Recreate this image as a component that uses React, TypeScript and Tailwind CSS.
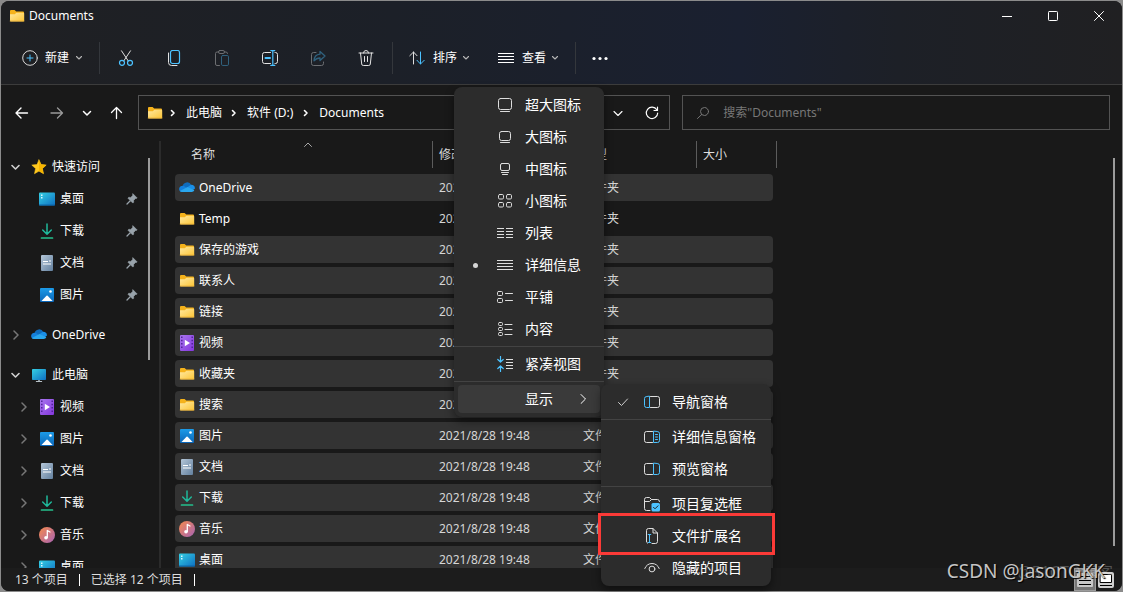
import type { ReactNode } from "react";

const BLUE = "#4cc2ff";

type SvgProps = { size?: number; children: ReactNode; className?: string };

function Svg({ size = 16, children, className = "" }: SvgProps) {
  return (
    <svg
      width={size}
      height={size}
      viewBox={`0 0 ${size} ${size}`}
      fill="none"
      stroke="currentColor"
      strokeLinecap="round"
      strokeLinejoin="round"
      className={`shrink-0 ${className}`}
      aria-hidden="true"
    >
      {children}
    </svg>
  );
}

/* ---------- coloured shell icons ---------- */

function FolderIcon() {
  return (
    <Svg>
      <path d="M1 3a1 1 0 0 1 1-1h3.6l1.6 1.6H14a1 1 0 0 1 1 1V8H1z" fill="#f5b21b" stroke="none" />
      <path d="M1 6.2h4.8L7.4 4.8H14.4a.8.8 0 0 1 .8.8v7a.9.9 0 0 1-.9.9H1.9a.9.9 0 0 1-.9-.9z" fill="url(#folderFace)" stroke="none" />
      <path d="M1.2 13h13.8" stroke="#eab03a" strokeWidth=".8" />
    </Svg>
  );
}

function CloudIcon() {
  return (
    <Svg>
      <path d="M3.6 6.2A4.6 4.6 0 0 1 12.3 5l-4 4.8-6 1.2z" fill="#0f6cbd" stroke="none" />
      <path d="M.1 9.1a3.3 3.3 0 0 1 4.8-3l4.6 2.9-5.6 3H3.3a3.1 3.1 0 0 1-3.2-2.9z" fill="#1480dc" stroke="none" />
      <path d="M8.3 7.2 12 4.800a3.900 3.900 0 0 1 4 3.700l-2.600 1.900z" fill="#1a8fe8" stroke="none" />
      <path d="M.9 11 8.600 6.900l6.700 3.400c-.5 1.100-1.400 1.700-2.600 1.700H3.300A3 3 0 0 1 .9 11z" fill="#2aa7ee" stroke="none" />
    </Svg>
  );
}

function StarIcon() {
  return (
    <Svg>
      <path d="m8 .9 2.100 4.700 5.100.5-3.800 3.500 1.100 5.100L8 12.100l-4.500 2.600 1.100-5.100L.8 6.100l5.100-.5z" fill="#ffc81e" stroke="#ffc81e" strokeWidth=".6" />
      <path d="M8 12.100v-11l2.100 4.500 5 .5-3.700 3.500 1.100 5z" fill="#f7b500" stroke="none" />
    </Svg>
  );
}

function DesktopIcon() {
  return (
    <Svg>
      <rect x="0" y="1.500" width="16" height="13" rx="1" fill="url(#screenFace)" stroke="none" />
      <path d="M2 3.500h1.500v1.500H2zM2 6h1.500v1.500H2z" fill="#d8f7ff" stroke="none" />
      <path d="M.5 14h15" stroke="#0b64a8" strokeWidth="1" />
    </Svg>
  );
}

function MonitorIcon() {
  return (
    <Svg>
      <rect x="1" y="2" width="14" height="11" rx=".8" fill="url(#screenFace)" stroke="none" />
      <path d="M7 13h2v1.200H7z" fill="#8c979f" stroke="none" />
      <path d="M5.300 14.500h5.400" stroke="#b8c1c7" strokeWidth="1" />
    </Svg>
  );
}

function DownloadIcon() {
  return (
    <Svg>
      <path d="M8 1v10M3.700 7 8 11.200 12.300 7" stroke="#1fb89a" strokeWidth="1.500" />
      <path d="M2.500 15h11" stroke="#25c08d" strokeWidth="1.700" />
    </Svg>
  );
}

function DocumentIcon() {
  return (
    <Svg>
      <rect x="2" y="0" width="12" height="16" rx="1" fill="url(#docFace)" stroke="none" />
      <path d="M4 6.500h5M4 9h8M10 6h2" stroke="#fff" strokeWidth="1.200" strokeLinecap="butt" />
    </Svg>
  );
}

function PictureIcon() {
  return (
    <Svg>
      <rect x="1" y="1" width="14" height="14" rx="1" fill="url(#picFace)" stroke="none" />
      <path d="m2.500 14 5-5.200a.8.8 0 0 1 1.100 0l5 5.200z" fill="#fff" stroke="none" />
      <circle cx="11.500" cy="4.500" r="1.300" fill="#fff" stroke="none" />
    </Svg>
  );
}

function VideoIcon() {
  return (
    <Svg>
      <rect x="1" y="0" width="14" height="16" rx="1" fill="url(#videoFace)" stroke="none" />
      <path d="M2.800 1.500v13M13.200 1.500v13" stroke="#4d1f96" strokeWidth="1.400" strokeDasharray="1.500 1.800" strokeLinecap="butt" />
      <path d="M5.800 4.700v6.600L11 8z" fill="#fff" stroke="none" />
    </Svg>
  );
}

function MusicIcon() {
  return (
    <Svg>
      <circle cx="8" cy="8" r="8" fill="url(#musicFace)" stroke="none" />
      <path d="M8.300 10.500V3.500l2.700 1.500" stroke="#fff" strokeWidth="1.300" />
      <circle cx="7" cy="10.800" r="1.800" fill="#fff" stroke="none" />
    </Svg>
  );
}

function Gradients() {
  return (
    <svg width="0" height="0" className="absolute" aria-hidden="true">
      <defs>
        <linearGradient id="folderFace" x1="0" y1="0" x2="1" y2="1">
          <stop offset="0" stopColor="#ffe8a0" />
          <stop offset="1" stopColor="#fcc535" />
        </linearGradient>
        <linearGradient id="screenFace" x1="0" y1="0" x2="1" y2="1">
          <stop offset="0" stopColor="#35d0e4" />
          <stop offset="1" stopColor="#0e6fc2" />
        </linearGradient>
        <linearGradient id="docFace" x1="0" y1="0" x2="1" y2="1">
          <stop offset="0" stopColor="#b4c6d8" />
          <stop offset="1" stopColor="#63809e" />
        </linearGradient>
        <linearGradient id="picFace" x1="0" y1="0" x2="0" y2="1">
          <stop offset="0" stopColor="#1c9be8" />
          <stop offset="1" stopColor="#0a65b8" />
        </linearGradient>
        <linearGradient id="videoFace" x1="0" y1="0" x2="1" y2="1">
          <stop offset="0" stopColor="#a876ee" />
          <stop offset="1" stopColor="#8436dd" />
        </linearGradient>
        <linearGradient id="musicFace" x1="0" y1="0" x2="1" y2="1">
          <stop offset="0" stopColor="#f68a4c" />
          <stop offset="1" stopColor="#a763b5" />
        </linearGradient>
      </defs>
    </svg>
  );
}

/* ---------- small line icons ---------- */

const Down = ({ className = "" }: { className?: string }) => (
  <Svg size={8} className={className}>
    <path d="m1.500 2.500 2.500 2.500 2.500-2.500" strokeWidth="1.100" />
  </Svg>
);

const Right = ({ className = "" }: { className?: string }) => (
  <Svg size={8} className={className}>
    <path d="m2.500 1.500 2.500 2.500-2.500 2.500" strokeWidth="1.600" />
  </Svg>
);

function PinIcon() {
  return (
    <Svg size={12} className="text-[#98a2aa]">
      <path d="m7 .8 4.200 4.200-1 .5-.7-.1-1.900 2 .1 1.800-.9.9-4.900-4.900.9-.9 1.900.1 2-1.900-.1-.8z" fill="currentColor" strokeWidth=".6" />
      <path d="M4 8 1 11" strokeWidth="1.300" />
    </Svg>
  );
}

/* ---------- title bar and command bar ---------- */

function TitleBar() {
  const control = "flex h-7 w-[46px] items-center justify-center text-white hover:bg-white/10";
  return (
    <header className="flex h-[29px] items-center">
      <div className="flex flex-1 items-center gap-1 pl-2">
        <FolderIcon />
        <h1>Documents</h1>
      </div>
      <button aria-label="最小化" className={control}>
        <Svg size={10}><path d="M0 5.500h10" strokeLinecap="butt" /></Svg>
      </button>
      <button aria-label="最大化" className={control}>
        <Svg size={10}><rect x=".5" y=".5" width="9" height="9" rx=".8" /></Svg>
      </button>
      <button aria-label="关闭" className={control}>
        <Svg size={10}><path d="m.5.5 9 9M9.500.5l-9 9" /></Svg>
      </button>
    </header>
  );
}

const Divider = () => <div className="h-8 w-px shrink-0 bg-[#34373c]" />;

function IconButton({ label, children, disabled = false }: { label: string; children: ReactNode; disabled?: boolean }) {
  return (
    <button
      aria-label={label}
      disabled={disabled}
      className="flex h-8 w-12 items-center justify-center text-[#e2e2e2] disabled:opacity-40"
    >
      <Svg>{children}</Svg>
    </button>
  );
}

function CommandBar() {
  return (
    <div className="flex h-[54px] items-center pt-0.5" role="toolbar" aria-label="命令栏">
      <button className="flex w-[98px] items-center pl-[21px] text-white">
        <Svg className="text-[#d8d8d8]">
          <circle cx="8" cy="8" r="7.300" />
          <path d="M8 5v6M5 8h6" stroke={BLUE} />
        </Svg>
        <span className="ml-[7px]">新建</span>
        <Down className="ml-1.5 text-[#b5b5b5]" />
      </button>
      <Divider />
      <div className="flex px-0.5">
        <IconButton label="剪切">
          <path d="M3.500.8 10.300 11M12.500.8 5.700 11" />
          <circle cx="4" cy="12.800" r="2.500" stroke={BLUE} strokeWidth="1.200" />
          <circle cx="12" cy="12.800" r="2.500" stroke={BLUE} strokeWidth="1.200" />
        </IconButton>
        <IconButton label="复制">
          <path d="M2.500 3v9.500a3 3 0 0 0 3 3H11" />
          <rect x="4.500" y=".5" width="9" height="13" rx="2" stroke={BLUE} strokeWidth="1.200" />
        </IconButton>
        <IconButton label="粘贴" disabled>
          <path d="M5 2H3A1.500 1.500 0 0 0 1.500 3.500V14A1.500 1.500 0 0 0 3 15.500h2.500M10 2h2a1.500 1.500 0 0 1 1.500 1.500" />
          <rect x="4.500" y=".5" width="6" height="3" rx="1.300" />
          <rect x="7.500" y="5.500" width="7" height="10" rx="1.300" stroke={BLUE} />
        </IconButton>
        <IconButton label="重命名">
          <path d="M8.500 2.500H2.500a2 2 0 0 0-2 2v7a2 2 0 0 0 2 2h6M13 2.500h.5a2 2 0 0 1 2 2v7a2 2 0 0 1-2 2H13" />
          <path d="M3.500 8h4.500" stroke={BLUE} strokeWidth="2" />
          <path d="M10.800.6v14.800M8.800.6h4M8.800 15.400h4" stroke={BLUE} strokeWidth="1.200" />
        </IconButton>
        <IconButton label="共享" disabled>
          <path d="M6 2.500H3.500a2 2 0 0 0-2 2v9a2 2 0 0 0 2 2h8a2 2 0 0 0 2-2V12" />
          <path d="M10 1.500 15 6l-5 4.500V8C7 8 5.500 9 4 10.800 4.200 7 6.500 4.500 10 4.200z" stroke={BLUE} strokeWidth="1.300" />
        </IconButton>
        <IconButton label="删除">
          <path d="M1 3h14M5.500 3a2.500 2.500 0 0 1 5 0M2.500 3l1.200 11a1.600 1.600 0 0 0 1.600 1.500h5.400a1.600 1.600 0 0 0 1.600-1.500L13.500 3M6.500 6.500v5M9.500 6.500v5" />
        </IconButton>
      </div>
      <Divider />
      <button className="flex w-[90px] items-center pl-4 text-white">
        <Svg className="text-[#dedede]">
          <path d="M4.500 14V2M.8 5.700 4.500 2l3.500 3.700" />
          <path d="M11.500 2v12M8 10.300l3.500 3.700 3.700-3.700" stroke={BLUE} />
        </Svg>
        <span className="ml-2">排序</span>
        <Down className="ml-[5px] text-[#b5b5b5]" />
      </button>
      <button className="flex w-[92px] items-center pl-[15px] text-white" aria-haspopup="menu" aria-expanded="true">
        <Svg><path d="M0 3.500h16M0 6.500h16M0 9.500h16M0 12.500h16" strokeLinecap="butt" /></Svg>
        <span className="ml-2">查看</span>
        <Down className="ml-[5px] text-[#b5b5b5]" />
      </button>
      <Divider />
      <button aria-label="查看更多" className="pl-4 text-white">
        <Svg>
          <g fill="currentColor" stroke="none">
            <circle cx="2" cy="8.500" r="1.600" /><circle cx="8" cy="8.500" r="1.600" /><circle cx="14" cy="8.500" r="1.600" />
          </g>
        </Svg>
      </button>
    </div>
  );
}

/* ---------- navigation row ---------- */

function NavigationRow() {
  return (
    <div className="flex shrink-0 pt-[10px] pr-3 pb-[11px]">
      <div className="flex w-[137px] items-center pl-3 text-white">
        <button aria-label="后退"><Svg><path d="M3 8h11.500M8 3 3 8l5 5" strokeWidth="1.400" /></Svg></button>
        <button aria-label="前进" className="ml-5 text-[#9a9a9a]"><Svg><path d="M2 8h11.500M8.500 3l5 5-5 5" strokeWidth="1.300" /></Svg></button>
        <button aria-label="最近的位置" className="ml-4"><Svg size={12}><path d="m2.500 4.500 3.500 3.500 3.500-3.500" strokeWidth="1.500" /></Svg></button>
        <button aria-label="上移" className="ml-4"><Svg><path d="M7.500 13.500V2.500M2.500 7.500l5-5 5 5" strokeWidth="1.300" /></Svg></button>
      </div>
      <div className="flex min-w-0 flex-1 gap-3">
        <div className="flex h-[35px] min-w-0 flex-[532] items-center border border-[#535353] px-2 text-white">
          <FolderIcon />
          <Right className="ml-1.5" />
          <a href="#pc" className="ml-[9px]">此电脑</a>
          <Right className="ml-2" />
          <a href="#d" className="ml-[9px] whitespace-nowrap">软件 (D:)</a>
          <Right className="ml-[9px]" />
          <a href="#documents" className="ml-[9px]">Documents</a>
          <button aria-label="以前的位置" className="ml-auto"><Svg size={10}><path d="m1 3.500 4 4 4-4" strokeWidth="1.100" /></Svg></button>
          <button aria-label="刷新" className="mr-px ml-[21px]">
            <Svg><path d="M12.800 4.800A5.700 5.700 0 1 0 13.700 8M13.500 2v3.500H10" strokeWidth="1.200" /></Svg>
          </button>
        </div>
        <label className="flex h-[35px] min-w-0 flex-[428] items-center gap-3 border border-[#535353] pl-3 text-[#777]">
          <Svg><circle cx="9.500" cy="6.500" r="4" /><path d="M6.700 9.500 2.500 13.500" /></Svg>
          <input aria-label="搜索" type="search" placeholder={'搜索"Documents"'} className="min-w-0 flex-1 bg-transparent text-white outline-none placeholder:text-[#777]" />
        </label>
      </div>
    </div>
  );
}

/* ---------- sidebar ---------- */

type Node = { name: string; icon: ReactNode };

const pinned: Node[] = [
  { name: "桌面", icon: <DesktopIcon /> },
  { name: "下载", icon: <DownloadIcon /> },
  { name: "文档", icon: <DocumentIcon /> },
  { name: "图片", icon: <PictureIcon /> },
];

const pcFolders: Node[] = [
  { name: "视频", icon: <VideoIcon /> },
  { name: "图片", icon: <PictureIcon /> },
  { name: "文档", icon: <DocumentIcon /> },
  { name: "下载", icon: <DownloadIcon /> },
  { name: "音乐", icon: <MusicIcon /> },
  { name: "桌面", icon: <DesktopIcon /> },
];

function TreeRoot({ name, icon, open }: Node & { open: boolean }) {
  return (
    <a href={`#${name}`} className="flex h-8 items-center pl-[10px]">
      <Svg size={10} className={open ? "text-[#d0d0d0]" : "text-[#777]"}>
        {open ? <path d="m1 3.500 3.500 3.500L8 3.500" strokeWidth="1.600" /> : <path d="m3 1 4 4-4 4" strokeWidth="1.500" />}
      </Svg>
      <span className="ml-2.5 flex items-center gap-[5px]">{icon}{name}</span>
    </a>
  );
}

function TreeChild({ name, icon, pin = false }: Node & { pin?: boolean }) {
  return (
    <a href={`#${name}`} className="flex h-8 items-center pr-3 pl-[18px]">
      <Svg size={10} className="text-[#777]">{!pin && <path d="m3 1 4 4-4 4" strokeWidth="1.500" />}</Svg>
      <span className="ml-2.5 flex flex-1 items-center gap-[5px]">{icon}{name}</span>
      {pin && <PinIcon />}
    </a>
  );
}

function Sidebar() {
  return (
    <nav className="flex w-[160px] shrink-0 overflow-hidden border-r-2 border-[#2b2b2b]" aria-label="导航窗格">
      <div className="min-w-0 flex-1 pt-[10px] text-white">
        <TreeRoot name="快速访问" icon={<StarIcon />} open />
        {pinned.map((n) => <TreeChild key={n.name} {...n} pin />)}
        <div className="mt-2"><TreeRoot name="OneDrive" icon={<CloudIcon />} open={false} /></div>
        <div className="mt-2"><TreeRoot name="此电脑" icon={<MonitorIcon />} open /></div>
        {pcFolders.map((n) => <TreeChild key={n.name} {...n} />)}
      </div>
      <div className="mt-[17px] mr-[9px] -ml-0.5 h-[202px] w-0.5 bg-[#9b9b9b]" />
    </nav>
  );
}

/* ---------- file list ---------- */

const files: (Node & { selected: boolean })[] = [
  { name: "OneDrive", icon: <CloudIcon />, selected: true },
  { name: "Temp", icon: <FolderIcon />, selected: false },
  { name: "保存的游戏", icon: <FolderIcon />, selected: true },
  { name: "联系人", icon: <FolderIcon />, selected: true },
  { name: "链接", icon: <FolderIcon />, selected: true },
  { name: "视频", icon: <VideoIcon />, selected: true },
  { name: "收藏夹", icon: <FolderIcon />, selected: true },
  { name: "搜索", icon: <FolderIcon />, selected: true },
  { name: "图片", icon: <PictureIcon />, selected: true },
  { name: "文档", icon: <DocumentIcon />, selected: true },
  { name: "下载", icon: <DownloadIcon />, selected: true },
  { name: "音乐", icon: <MusicIcon />, selected: true },
  { name: "桌面", icon: <DesktopIcon />, selected: true },
];

function FileList() {
  const th = "h-[27px] border-r border-[#5c5c5c] p-0 pl-1.5 text-left font-normal text-[#dedede]";
  return (
    <main className="flex min-w-0 flex-1 overflow-hidden">
      <div className="min-w-0 flex-1 overflow-hidden pl-[14px]">
        <table className="w-[602px] table-fixed border-separate border-spacing-0">
          <colgroup>
            <col className="w-[258px]" />
            <col className="w-[144px]" />
            <col className="w-[120px]" />
            <col className="w-[80px]" />
          </colgroup>
          <thead>
            <tr>
              <th className={th} aria-sort="ascending">
                <span className="flex items-center pl-[10px]">
                  名称
                  <Svg size={10} className="mb-4 ml-[88px] text-[#a8a8a8]"><path d="M1.500 4.500 5 1l3.500 3.500" /></Svg>
                </span>
              </th>
              <th className={`${th} border-r-0`}>修改日期</th>
              <th className={th}>类型</th>
              <th className={th}>大小</th>
            </tr>
          </thead>
          <tbody>
            <tr aria-hidden="true"><td className="h-[6px] p-0" colSpan={4} /></tr>
            {files.map((f) => {
              const fill = f.selected ? "bg-[#333333]" : "";
              return (
                <tr key={f.name} aria-selected={f.selected}>
                  <td className="h-[31px] p-0 pb-1">
                    <span className={`flex h-[27px] items-center gap-1 rounded-l-sm pl-1 text-white ${fill}`}>{f.icon}{f.name}</span>
                  </td>
                  <td className="p-0 pb-1"><span className={`flex h-[27px] items-center pl-1.5 whitespace-nowrap text-[#d6d6d6] ${fill}`}>2021/8/28 19:48</span></td>
                  <td className="p-0 pb-1"><span className={`flex h-[27px] items-center pl-1.5 text-[#d6d6d6] ${fill}`}>文件夹</span></td>
                  <td className="p-0 pr-1 pb-1"><span className={`flex h-[27px] rounded-r-sm ${fill}`} /></td>
                </tr>
              );
            })}
          </tbody>
        </table>
      </div>
      <div className="mt-[17px] mr-[7px] mb-[22px] w-0.5 bg-[#9b9b9b]" />
    </main>
  );
}

/* ---------- status bar ---------- */

function StatusBar() {
  return (
    <footer className="flex h-[23px] shrink-0 items-center bg-[#1c1c1c] pl-3.5 text-[#dedede]">
      <span>13 个项目</span>
      <span className="ml-[11px] h-3 w-px bg-white" />
      <span className="ml-[11px]">已选择 12 个项目</span>
      <span className="ml-[11px] h-3 w-px bg-white" />
      <div className="mr-1.5 ml-auto flex">
        <button aria-label="详细信息" className="flex h-[23px] w-[22px] items-center justify-center border border-[#9c9c9c] bg-[#777] text-black">
          <Svg>
            <rect x="0" y="1" width="16" height="14" rx="1" fill="#c8c8c8" stroke="none" />
            <path d="M2 4.500h12M2 8.500h12M2 12.500h12" strokeLinecap="butt" />
          </Svg>
        </button>
        <button aria-label="大缩略图" className="flex h-[23px] w-[20px] items-center justify-center text-black">
          <Svg>
            <rect x="0" y="0" width="16" height="16" rx="2" fill="#cfcfcf" stroke="none" />
            <rect x="2.500" y="2.500" width="11" height="8" fill="#fff" />
            <path d="M2 13.500h12" strokeLinecap="butt" />
          </Svg>
        </button>
      </div>
    </footer>
  );
}

/* ---------- menus ---------- */

type MenuItemProps = { label: string; icon?: ReactNode; mark?: ReactNode; trailing?: ReactNode; active?: boolean };

function MenuItem({ label, icon, mark, trailing, active = false }: MenuItemProps) {
  return (
    <div className="px-1 py-0.5">
      <button
        role="menuitem"
        className={`grid h-7 w-full grid-cols-[39px_28px_1fr_auto] items-center rounded text-left text-sm whitespace-nowrap text-white ${active ? "bg-[#3a3a3a]" : "hover:bg-[#3a3a3a]"}`}
      >
        <span className="flex justify-center pr-1 text-[#cfcfcf]">{mark}</span>
        <span className="text-[#dedede]">{icon && <Svg>{icon}</Svg>}</span>
        <span>{label}</span>
        <span className="pr-3">{trailing}</span>
      </button>
    </div>
  );
}

const MenuLine = () => <div role="separator" className="my-px h-px bg-[#434343]" />;

const viewItems: MenuItemProps[] = [
  { label: "超大图标", icon: <><rect x="1.500" y="1.500" width="13" height="11" rx="2" /><path d="M3.500 14.500h9" /></> },
  { label: "大图标", icon: <><rect x="2.500" y="2.500" width="11" height="9" rx="2" /><path d="M3.500 13.500h9" /></> },
  { label: "中图标", icon: <><rect x="3.500" y="2.500" width="9" height="7" rx="1.500" /><path d="M4.500 11.500h7M5.500 13.500h5" /></> },
  {
    label: "小图标",
    icon: <><rect x="1.500" y="1.500" width="5" height="4.500" rx="1.200" /><rect x="9.500" y="1.500" width="5" height="4.500" rx="1.200" /><rect x="1.500" y="9.500" width="5" height="4.500" rx="1.200" /><rect x="9.500" y="9.500" width="5" height="4.500" rx="1.200" /></>,
  },
  { label: "列表", icon: <path d="M0 3.500h7M0 6.500h7M0 9.500h7M0 12.500h7M9 3.500h7M9 6.500h7M9 9.500h7M9 12.500h7" strokeLinecap="butt" /> },
  {
    label: "详细信息",
    icon: <path d="M0 3.500h16M0 6.500h16M0 9.500h16M0 12.500h16" strokeLinecap="butt" />,
    mark: <span className="h-[5px] w-[5px] rounded-full bg-[#d6d6d6]" />,
  },
  { label: "平铺", icon: <><rect x=".5" y="2.500" width="5" height="4" rx="1" /><rect x=".5" y="9.500" width="5" height="4" rx="1" /><path d="M8.500 4.500h7M8.500 11.500h7" /></> },
  {
    label: "内容",
    icon: <><rect x="1.500" y="1.500" width="4" height="3" rx="1" /><rect x="1.500" y="6.500" width="4" height="3" rx="1" /><rect x="1.500" y="11.500" width="4" height="3" rx="1" /><path d="M8 3.500h7M8 8.500h7M8 13.500h7" /></>,
  },
];

const compactIcon = (
  <>
    <path d="M3.500.5v5M.8 3.500l2.700 2.500 2.700-2.500M3.500 15.500v-5M.8 12.500 3.500 10l2.700 2.500" stroke={BLUE} strokeWidth="1.200" />
    <path d="M9 3.500h7M9 6.500h7M9 9.500h7M9 12.500h7" strokeLinecap="butt" />
  </>
);

const navPaneIcon = (
  <>
    <path d="M6.500 2.500h7a2 2 0 0 1 2 2v7a2 2 0 0 1-2 2h-7" />
    <path d="M5.500 2.500v11h-3a2 2 0 0 1-2-2v-7a2 2 0 0 1 2-2z" stroke={BLUE} />
  </>
);

const previewPaneIcon = (
  <>
    <path d="M8.500 2.500h-6a2 2 0 0 0-2 2v7a2 2 0 0 0 2 2h6" />
    <path d="M9.500 2.500v11h4a2 2 0 0 0 2-2v-7a2 2 0 0 0-2-2z" stroke={BLUE} />
  </>
);

const detailsPaneIcon = (
  <>
    {previewPaneIcon}
    <path d="M11.500 5.500h2M11.500 8h2M11.500 10.500h2" stroke={BLUE} />
  </>
);

const checkBoxesIcon = (
  <>
    <path d="M6 14.500H2.500a2 2 0 0 1-2-2v-9a2 2 0 0 1 2-2h3l2 2h6a2 2 0 0 1 2 2M.5 5.500h5l2-2" />
    <rect x="7.500" y="7" width="8.500" height="8.500" rx="1.500" fill={BLUE} stroke="none" />
    <path d="m9.500 11.300 1.500 1.500 3-3" stroke="#222" />
  </>
);

const extensionIcon = (
  <>
    <path d="M2.500 13.500v-11a2 2 0 0 1 2-2H9l4.500 4.500v8.500a2 2 0 0 1-2 2H8M9 .5V5h4.500" />
    <path d="M5.500 6.500v8M4.200 6.500h2.600M4.200 14.500h2.600" stroke={BLUE} />
    <path d="M2.500 13.500a2 2 0 0 0 1 1.700" />
  </>
);

const hiddenIcon = (
  <>
    <path d="M.8 8.500C2 5.300 4.700 3.500 8 3.500s6 1.800 7.200 5" />
    <circle cx="8" cy="9" r="2.900" />
  </>
);

function ShowSubmenu() {
  return (
    <div role="menu" aria-label="显示" className="absolute top-[297px] left-[147px] w-[170px] rounded-lg bg-[#2c2c2c] py-0.5 shadow-[0_4px_10px_rgba(0,0,0,0.45)]">
      <MenuItem label="导航窗格" icon={navPaneIcon} mark={<Svg size={12}><path d="m1.500 6.500 3 3 6-6.500" /></Svg>} />
      <MenuLine />
      <MenuItem label="详细信息窗格" icon={detailsPaneIcon} />
      <MenuItem label="预览窗格" icon={previewPaneIcon} />
      <MenuLine />
      <MenuItem label="项目复选框" icon={checkBoxesIcon} />
      <div className="relative">
        <MenuItem label="文件扩展名" icon={extensionIcon} />
        <div className="pointer-events-none absolute -top-[7px] -right-1 -bottom-[3px] -left-[3px] border-[3px] border-[#fb3a37]" />
      </div>
      <MenuItem label="隐藏的项目" icon={hiddenIcon} />
    </div>
  );
}

function ViewMenu() {
  return (
    <div role="menu" aria-label="查看" className="absolute top-[87px] left-[454px] w-[150px] rounded-lg bg-[#2c2c2c] py-0.5 shadow-[0_4px_10px_rgba(0,0,0,0.45)]">
      {viewItems.map((item) => <MenuItem key={item.label} {...item} />)}
      <MenuLine />
      <MenuItem label="紧凑视图" icon={compactIcon} />
      <MenuLine />
      <MenuItem label="显示" active trailing={<Svg size={10}><path d="m3 .5 4.500 4.500L3 9.500" /></Svg>} />
      <ShowSubmenu />
    </div>
  );
}

export default function App() {
  return (
    <div className="relative flex h-screen flex-col overflow-hidden bg-[#8b8b8b] p-px font-['Noto_Sans','Noto_Sans_CJK_SC',sans-serif] text-xs leading-4 text-white">
      <Gradients />
      <div className="flex min-h-0 flex-1 flex-col overflow-hidden rounded-lg bg-[#191919]">
        <div className="shrink-0 border-b border-[#3c3c3c] bg-[linear-gradient(90deg,#1f2023_0%,#1c2028_35%,#1a2030_66%,#1d2027_80%,#202022_100%)]">
          <TitleBar />
          <CommandBar />
        </div>
        <NavigationRow />
        <div className="flex min-h-0 flex-1">
          <Sidebar />
          <FileList />
        </div>
        <StatusBar />
      </div>
      <ViewMenu />
      <div className="pointer-events-none absolute right-2.5 bottom-2 text-base leading-6 text-white/25">@51CTO博客</div>
      <div className="pointer-events-none absolute right-[18px] bottom-[9px] text-[19px] leading-6 text-[#c4c4c4] [text-shadow:1px_1px_1px_#000]">CSDN @JasonGKK</div>
    </div>
  );
}
